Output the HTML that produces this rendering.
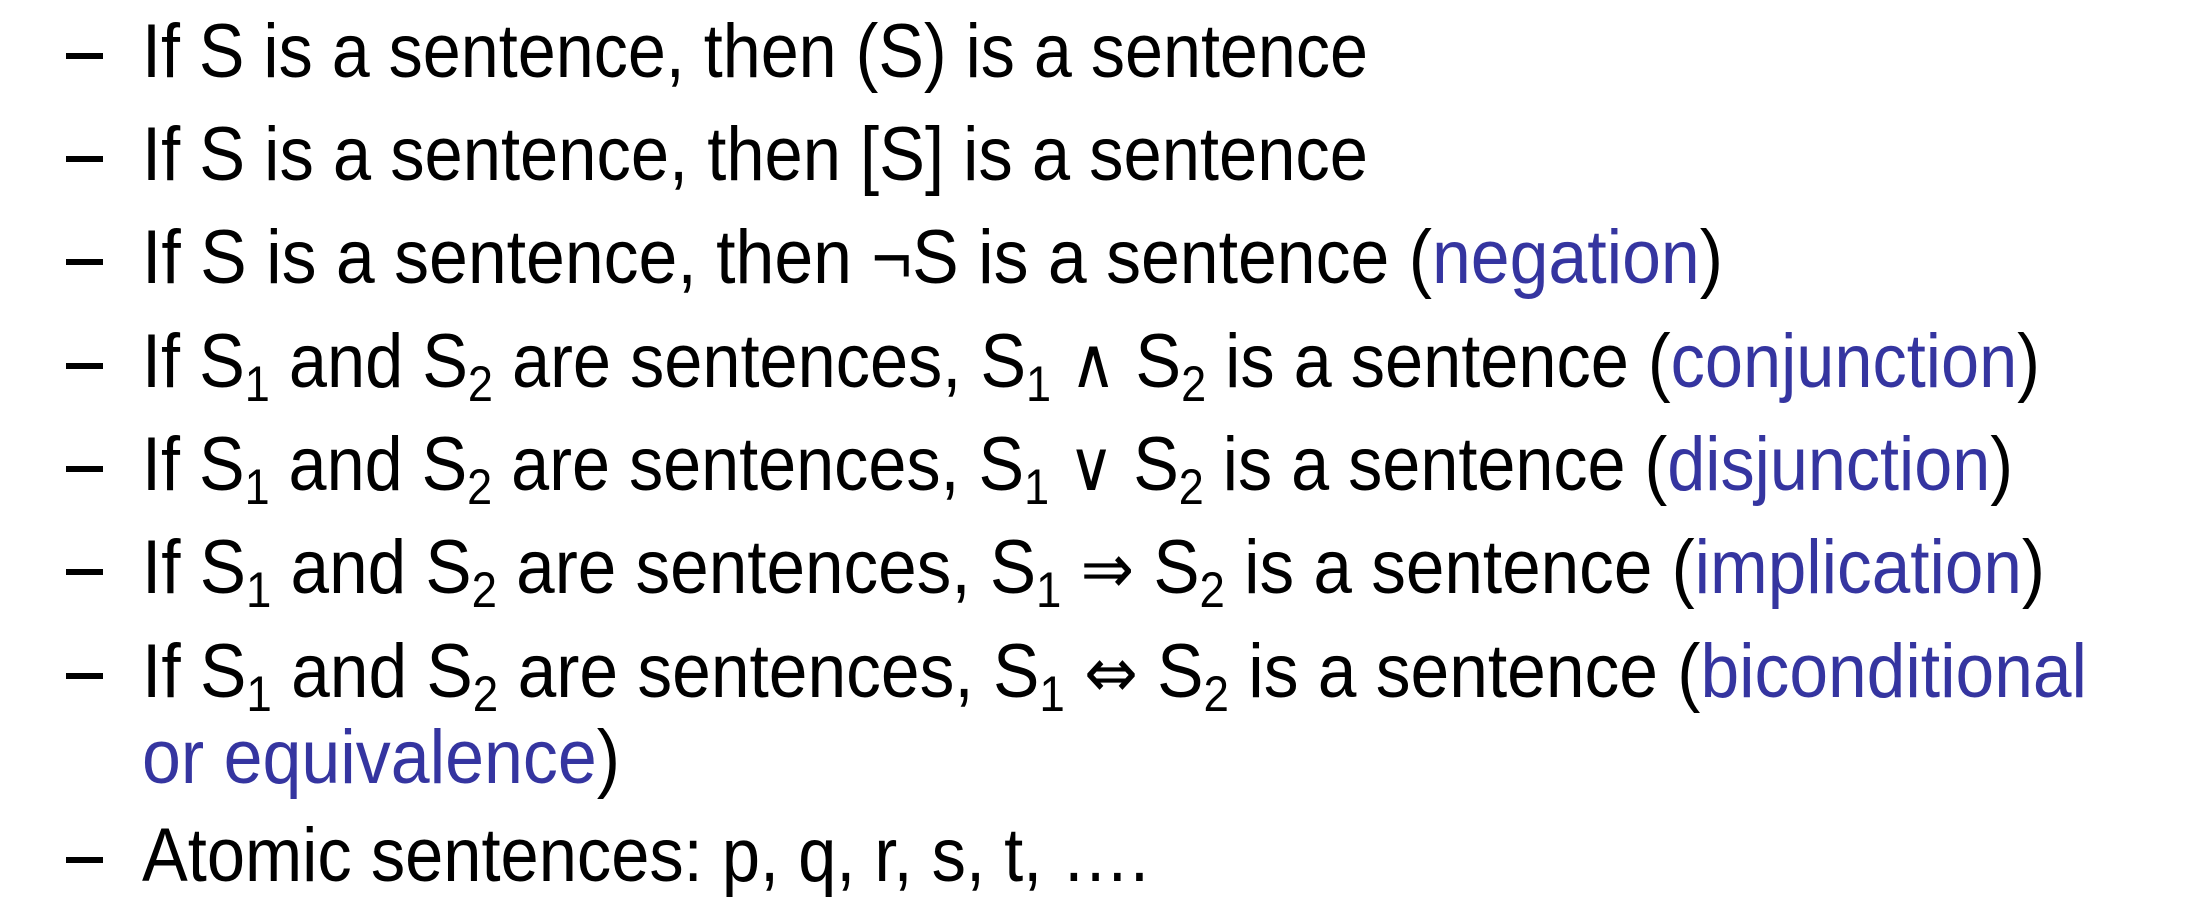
<!DOCTYPE html>
<html><head><meta charset="utf-8"><style>
html,body{margin:0;padding:0;background:#fff;width:2210px;height:923px;overflow:hidden}
svg text{font-family:"Liberation Sans","DejaVu Sans",sans-serif;font-size:76px;fill:#000}
.b{fill:#3535a0}
.s{font-size:50px}
.m{font-family:"DejaVu Sans",sans-serif;font-size:70px}
</style></head><body>
<svg width="2210" height="923" xmlns="http://www.w3.org/2000/svg">
<g fill="#000">
<rect x="66" y="53" width="37" height="6"/>
<rect x="66" y="156" width="37" height="6"/>
<rect x="66" y="259" width="37" height="6"/>
<rect x="66" y="363" width="37" height="6"/>
<rect x="66" y="466" width="37" height="6"/>
<rect x="66" y="569" width="37" height="6"/>
<rect x="66" y="673" width="37" height="6"/>
<rect x="66" y="857" width="37" height="6"/>
</g>
<text x="142" y="77" textLength="1226" lengthAdjust="spacingAndGlyphs">If S is a sentence, then (S) is a sentence</text>
<text x="142" y="180" textLength="1226" lengthAdjust="spacingAndGlyphs">If S is a sentence, then [S] is a sentence</text>
<text x="142" y="283" textLength="1581" lengthAdjust="spacingAndGlyphs">If S is a sentence, then ¬S is a sentence (<tspan class="b">negation</tspan>)</text>
<text x="142" y="387" textLength="1898" lengthAdjust="spacingAndGlyphs">If S<tspan class="s" dy="14">1</tspan><tspan dy="-14"> and S</tspan><tspan class="s" dy="14">2</tspan><tspan dy="-14"> are sentences, S</tspan><tspan class="s" dy="14">1</tspan><tspan dy="-14"> </tspan><tspan class="m">∧</tspan><tspan> S</tspan><tspan class="s" dy="14">2</tspan><tspan dy="-14"> is a sentence (</tspan><tspan class="b">conjunction</tspan>)</text>
<text x="142" y="490" textLength="1871" lengthAdjust="spacingAndGlyphs">If S<tspan class="s" dy="14">1</tspan><tspan dy="-14"> and S</tspan><tspan class="s" dy="14">2</tspan><tspan dy="-14"> are sentences, S</tspan><tspan class="s" dy="14">1</tspan><tspan dy="-14"> </tspan><tspan class="m">∨</tspan><tspan> S</tspan><tspan class="s" dy="14">2</tspan><tspan dy="-14"> is a sentence (</tspan><tspan class="b">disjunction</tspan>)</text>
<text x="142" y="593" textLength="1903" lengthAdjust="spacingAndGlyphs">If S<tspan class="s" dy="14">1</tspan><tspan dy="-14"> and S</tspan><tspan class="s" dy="14">2</tspan><tspan dy="-14"> are sentences, S</tspan><tspan class="s" dy="14">1</tspan><tspan dy="-14"> </tspan><tspan class="m">⇒</tspan><tspan> S</tspan><tspan class="s" dy="14">2</tspan><tspan dy="-14"> is a sentence (</tspan><tspan class="b">implication</tspan>)</text>
<text x="142" y="697" textLength="1945" lengthAdjust="spacingAndGlyphs">If S<tspan class="s" dy="14">1</tspan><tspan dy="-14"> and S</tspan><tspan class="s" dy="14">2</tspan><tspan dy="-14"> are sentences, S</tspan><tspan class="s" dy="14">1</tspan><tspan dy="-14"> </tspan><tspan class="m">⇔</tspan><tspan> S</tspan><tspan class="s" dy="14">2</tspan><tspan dy="-14"> is a sentence (</tspan><tspan class="b">biconditional</tspan></text>
<text x="142" y="783" textLength="478" lengthAdjust="spacingAndGlyphs"><tspan class="b">or equivalence</tspan>)</text>
<text x="142" y="881" textLength="1007" lengthAdjust="spacingAndGlyphs">Atomic sentences: p, q, r, s, t, ….</text>
</svg>
</body></html>
